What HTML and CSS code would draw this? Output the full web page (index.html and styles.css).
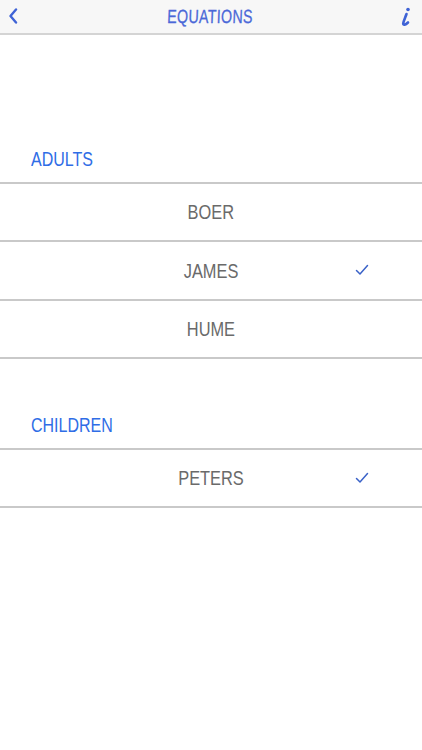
FILE: index.html
```html
<!DOCTYPE html>
<html>
<head>
<meta charset="utf-8">
<link rel="stylesheet" href="styles.css">
</head>
<body>
<div class="nav">
  <svg class="back" width="10" height="16" viewBox="0 0 10 16"><path d="M8 1.5 L2.5 8 L8 14.5" fill="none" stroke="#3f63d6" stroke-width="2.4" stroke-linecap="round" stroke-linejoin="round"/></svg>
  <div class="title"><span>EQUATIONS</span></div>
  <svg class="info" width="12" height="20" viewBox="0 0 12 20"><circle cx="9" cy="2.5" r="1.8" fill="#3f63d6"/><path d="M7.5 7 C6.5 10 4.5 14 4.2 16.5 C4 18.5 6.5 18 9 15.5" fill="none" stroke="#3f63d6" stroke-width="2.6" stroke-linecap="round"/></svg>
</div>
<div class="section first">
  <div class="header"><span>ADULTS</span></div>
  <div class="list">
    <div class="row"><span class="name">BOER</span></div>
    <div class="row tall"><span class="name">JAMES</span><svg class="check" width="14" height="12" viewBox="0 0 14 12"><path d="M1.5 6.5 L5 10 L12.5 1.5" fill="none" stroke="#3a62c8" stroke-width="1.5" stroke-linecap="round" stroke-linejoin="round"/></svg></div>
    <div class="row"><span class="name">HUME</span></div>
  </div>
</div>
<div class="section">
  <div class="header"><span>CHILDREN</span></div>
  <div class="list">
    <div class="row"><span class="name">PETERS</span><svg class="check" width="14" height="12" viewBox="0 0 14 12"><path d="M1.5 6.5 L5 10 L12.5 1.5" fill="none" stroke="#3a62c8" stroke-width="1.5" stroke-linecap="round" stroke-linejoin="round"/></svg></div>
  </div>
</div>
</body>
</html>
```
FILE: styles.css
```css
html, body { margin: 0; padding: 0; background: #fff; }
body { width: 422px; height: 750px; font-family: "Liberation Sans", Arial, sans-serif; overflow: hidden; }
.nav { height: 33px; background: #f7f7f7; border-bottom: 2px solid #d4d4d4; display: flex; align-items: center; justify-content: space-between; padding: 0 11px 0 8px; position: relative; }
.back { display: block; margin-top: -1px; }
.info { display: block; }
.title { position: absolute; left: 0; right: 0; top: 6px; text-align: center; font-size: 19px; color: #4a68d8; }
.title span { display: inline-block; transform: translateX(-1px) scaleX(0.75) skewX(-3deg); letter-spacing: 0.4px; -webkit-text-stroke: 0.3px #4a68d8; }
.section.first { margin-top: 110px; }
.section { margin-top: 52px; }
.header { padding-left: 31px; font-size: 20px; color: #2f6de6; height: 37px; line-height: 28px; }
.header span { display: inline-block; transform: scaleX(0.8); transform-origin: left center; }
.list { border-top: 2px solid #c9c9c9; }
.row { height: 56px; border-bottom: 2px solid #c9c9c9; position: relative; display: flex; align-items: center; justify-content: center; }
.row.tall { height: 57px; }
.name { display: inline-block; font-size: 21px; color: #6a6a6a; transform: scaleX(0.78); }
.check { position: absolute; left: 355px; top: 22px; }
```
